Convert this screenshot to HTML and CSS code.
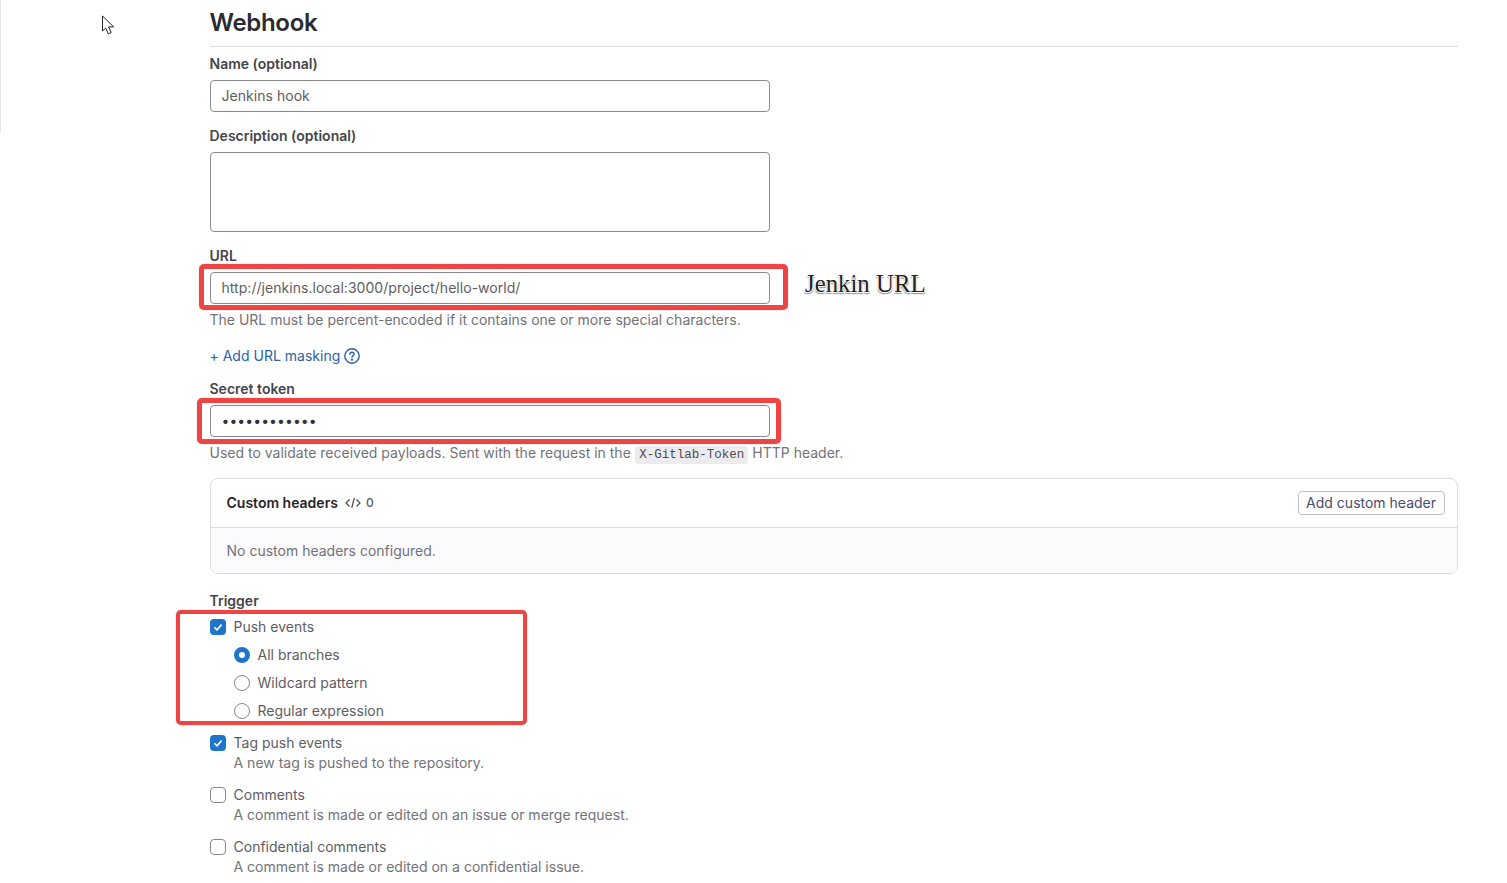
FILE: index.html
```html
<!DOCTYPE html>
<html lang="en">
<head>
<meta charset="utf-8">
<title>Webhook</title>
<link rel="stylesheet" href="styles.css">
</head>
<body>
<div class="sidebar-edge"></div>
<svg class="cursor" width="15" height="21" viewBox="0 0 15 21"><path d="M1.5 1V16L4.8 13.1L7.3 18.9L10.2 17.6L7.6 11.9H12.7Z" fill="#fff" stroke="#222" stroke-width="1" stroke-linejoin="round"/></svg>
<main class="page">
  <h2 class="title">Webhook</h2>
  <form class="form">
    <label class="label">Name (optional)</label>
    <div class="input">Jenkins hook</div>
    <label class="label next">Description (optional)</label>
    <div class="input textarea"></div>
    <label class="label next">URL</label>
    <div class="input">http://jenkins.local:3000/project/hello-world/</div>
    <p class="help">The URL must be percent-encoded if it contains one or more special characters.</p>
    <div class="mask-row">
      <a class="link">+ Add URL masking</a>
      <svg class="help-icon" width="16" height="16" viewBox="0 0 16 16" fill="none" stroke="#2a62a8" stroke-width="1.4"><circle cx="8" cy="8" r="7.2"/><path d="M5.9 6.2C5.9 5 6.8 4.2 8 4.2S10.1 5 10.1 6.1C10.1 7.6 8 7.6 8 9.3" stroke-linecap="round"/><circle cx="8" cy="11.6" r=".5" fill="#2a62a8"/></svg>
    </div>
    <label class="label secret">Secret token</label>
    <div class="input dots">••••••••••••</div>
    <p class="help">Used to validate received payloads. Sent with the request in the <code class="code">X-Gitlab-Token</code> HTTP header.</p>
    <section class="card">
      <header class="card-head">
        <div class="card-title">
          <strong>Custom headers</strong>
          <svg width="16" height="16" viewBox="0 0 16 16" fill="none" stroke="#4a4a50" stroke-width="1.2"><path d="M4.5 4.5L1 8l3.5 3.5M11.5 4.5L15 8l-3.5 3.5M9.3 3L6.7 13"/></svg>
          <span class="count">0</span>
        </div>
        <button type="button" class="btn">Add custom header</button>
      </header>
      <div class="card-body">No custom headers configured.</div>
    </section>
    <label class="label trigger">Trigger</label>
    <div class="check"><span class="box on"><svg width="16" height="16" viewBox="0 0 16 16" fill="none"><path d="M4.4 8.3L7 10.8L11.6 5.6" stroke="#fff" stroke-width="1.6"/></svg></span>Push events</div>
    <div class="radio-group">
      <div class="radio-row"><span class="radio on"></span>All branches</div>
      <div class="radio-row"><span class="radio"></span>Wildcard pattern</div>
      <div class="radio-row"><span class="radio"></span>Regular expression</div>
    </div>
    <div class="check spaced"><span class="box on"><svg width="16" height="16" viewBox="0 0 16 16" fill="none"><path d="M4.4 8.3L7 10.8L11.6 5.6" stroke="#fff" stroke-width="1.6"/></svg></span>Tag push events</div>
    <p class="desc">A new tag is pushed to the repository.</p>
    <div class="check spaced"><span class="box"></span>Comments</div>
    <p class="desc">A comment is made or edited on an issue or merge request.</p>
    <div class="check spaced"><span class="box"></span>Confidential comments</div>
    <p class="desc">A comment is made or edited on a confidential issue.</p>
  </form>
</main>
<div class="mark mark-url"></div>
<div class="mark mark-secret"></div>
<div class="mark mark-trigger"></div>
<div class="note">Jenkin URL</div>
</body>
</html>
```
FILE: styles.css
```css
* { box-sizing: border-box; }
html, body { margin: 0; height: 883px; overflow: hidden; background: #fff; }
body { font-family: Inter, "Liberation Sans", sans-serif; font-size: 14px; line-height: 20px; letter-spacing: 0.005px; color: #3a383f; position: relative; }
.sidebar-edge { position: absolute; left: 0; top: 0; width: 1px; height: 132px; background: #e6e6e8; }
.cursor { position: absolute; left: 101px; top: 15px; }
.page { margin-left: 210px; width: 1248px; }
.title { margin: 0; height: 47px; padding-top: 8px; font-size: 24px; line-height: 30px; font-weight: 600; letter-spacing: -0.32px; color: #2b2a30; border-bottom: 1px solid #dcdcde; text-indent: -0.5px; }
.form { display: flex; flex-direction: column; padding-top: 7px; }
.label { display: block; font-weight: 600; color: #45444a; margin-bottom: 6px; text-indent: -0.5px; }
.label.next { margin-top: 14px; }
.label.secret { margin-top: 13px; }
.label.trigger { margin-top: 17px; }
.input { width: 560px; height: 32px; padding: 5px 10.5px; border: 1px solid #89888d; border-radius: 4px; color: #5e5d64; background: #fff; letter-spacing: 0.04px; }
.textarea { height: 80px; }
.dots { letter-spacing: 0.06px; color: #333238; }
.help { margin: 6px 0 0; color: #737278; height: 20px; text-indent: -0.5px; }
.code { font-family: "Liberation Mono", monospace; font-size: 12.5px; line-height: 1; background: #ececef; color: #4c4b51; padding: 2px 4px; margin-left: 0.5px; border-radius: 4px; }
.mask-row { display: flex; align-items: center; gap: 4px; margin-top: 16px; height: 20px; margin-left: -0.5px; }
.link { color: #2a62a8; }
.card { margin-top: 15px; height: 96px; border: 1px solid #dcdcde; border-radius: 8px; overflow: hidden; }
.card-head { height: 49px; display: flex; align-items: center; justify-content: space-between; padding: 0 12px 0 15.5px; border-bottom: 1px solid #dcdcde; }
.card-title { display: flex; align-items: center; gap: 7px; }
.card-title strong { font-weight: 600; color: #26252b; }
.count { font-size: 12px; color: #5e5d64; margin-left: -2px; font-weight: 500; }
.btn { height: 24px; padding: 0 8px 0 7.5px; font: inherit; color: #474d6b; background: #fff; border: 1px solid #bfbfc3; border-radius: 4px; }
.card-body { height: 45px; padding: 13px 15.5px; background: #fbfafd; color: #737278; }
.check { display: flex; align-items: center; gap: 7.5px; height: 20px; color: #5e5d64; }
.check.spaced { margin-top: 12px; }
.box { width: 16px; height: 16px; border: 1px solid #89888d; border-radius: 4px; background: #fff; display: block; }
.box.on { background: #1f75cb; border: 0; }
.box svg { display: block; }
.radio-group { display: flex; flex-direction: column; gap: 8px; margin-top: 8px; padding-left: 24px; }
.radio-row { display: flex; align-items: center; gap: 7.5px; height: 20px; color: #5e5d64; }
.radio { width: 16px; height: 16px; border: 1px solid #89888d; border-radius: 50%; background: #fff; }
.radio.on { border: 5px solid #1f75cb; }
.desc { margin: 0; padding-left: 23.5px; color: #737278; }
.mark { position: absolute; border: 5px solid #ef4444; border-radius: 5px; box-shadow: 0 0 1px rgba(120, 60, 60, .7); }
.mark-url { left: 199px; top: 264px; width: 589px; height: 46px; }
.mark-secret { left: 197px; top: 398px; width: 584px; height: 46px; }
.mark-trigger { left: 176px; top: 610px; width: 351px; height: 115px; border-width: 4px; }
.note { position: absolute; left: 805px; top: 269px; font-family: "Liberation Serif", serif; font-size: 24.8px; line-height: 30px; color: #222; text-shadow: 0 1px 0 #fff, 1px 0 0 #fff, -1px 0 0 #fff, 1px 2px 1px #999, -1px 2px 1px #aaa; }
```
